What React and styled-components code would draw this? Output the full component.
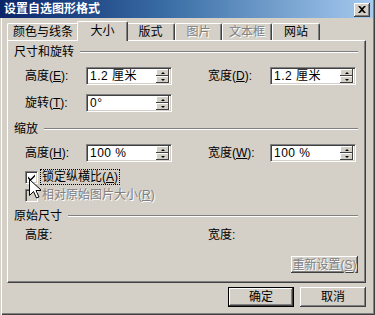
import styled, { createGlobalStyle } from 'styled-components';

const GlobalStyle = createGlobalStyle`
  html, body { margin: 0; padding: 0; background: #d4d0c8; }
  body {
    font-family: "Liberation Sans", "Noto Sans CJK SC", sans-serif;
    font-size: 12px;
    color: #000;
  }
`;

const Window = styled.div`
  position: relative;
  width: 375px;
  height: 315px;
  box-sizing: border-box;
  padding: 0 2px 2px 0;
  background: #d4d0c8;
  box-shadow: inset 1px 0 0 #d4d0c8, inset 2px 0 0 #fff,
    inset -1px -1px 0 #404040, inset -2px -2px 0 #808080;
  display: flex;
  flex-direction: column;
  overflow: hidden;
`;

const TitleBar = styled.div`
  height: 18px;
  display: flex;
  align-items: center;
  justify-content: space-between;
  padding: 0 3px 0 4px;
  background: linear-gradient(to right, #0a246a 0%, #3a6ea5 45%, #a6caf0 100%);
`;

const Title = styled.span`
  color: #fff;
  font-weight: bold;
  font-size: 12px;
  line-height: 14px;
`;

const CloseButton = styled.div`
  width: 16px;
  height: 14px;
  margin-top: 1px;
  box-sizing: border-box;
  background: #d4d0c8;
  box-shadow: inset -1px -1px 0 #404040, inset 1px 1px 0 #fff,
    inset -2px -2px 0 #808080;
  display: flex;
  align-items: center;
  justify-content: center;
`;

const Body = styled.div`
  flex: 1;
  display: flex;
  flex-direction: column;
  padding: 3px 7px 0 7px;
`;

const TabRow = styled.div`
  height: 19px;
  display: flex;
  align-items: flex-end;
`;

const Tab = styled.div`
  position: relative;
  z-index: ${({ $active }) => ($active ? 2 : 1)};
  width: ${({ $w }) => $w}px;
  height: ${({ $active }) => ($active ? 20 : 17)}px;
  margin: 0 ${({ $active }) => ($active ? -2 : 0)}px
    ${({ $active }) => ($active ? -1 : 0)}px;
  box-sizing: border-box;
  background: #d4d0c8;
  border-top: 1px solid #fff;
  border-left: 1px solid #fff;
  border-right: 1px solid #404040;
  box-shadow: inset -1px 0 0 #808080;
  border-radius: 2px 2px 0 0;
  display: flex;
  align-items: ${({ $active }) => ($active ? 'flex-start' : 'center')};
  padding-top: ${({ $active }) => ($active ? 2 : 0)}px;
  justify-content: center;
  line-height: 14px;
  color: ${({ $disabled }) => ($disabled ? '#808080' : '#000')};
  text-shadow: ${({ $disabled }) => ($disabled ? '1px 1px 0 #fff' : 'none')};
`;

const Panel = styled.div`
  position: relative;
  z-index: 1;
  height: 243px;
  box-sizing: border-box;
  padding: 4px 7px 0 6px;
  border-top: 1px solid #fff;
  border-left: 1px solid #fff;
  border-right: 1px solid #404040;
  border-bottom: 1px solid #404040;
  box-shadow: inset -1px -1px 0 #808080;
  display: flex;
  flex-direction: column;
`;

const SectionHeader = styled.div`
  height: 14px;
  margin-top: ${({ $mt }) => $mt || 0}px;
  display: flex;
  align-items: center;
  gap: 6px;
  line-height: 14px;

  &::after {
    content: '';
    flex: 1;
    height: 0;
    border-top: 1px solid #808080;
    border-bottom: 1px solid #fff;
  }
`;

const FieldRow = styled.div`
  display: flex;
  gap: 36px;
  padding-left: 11px;
  margin-top: ${({ $mt }) => $mt || 0}px;
`;

const Field = styled.div`
  display: grid;
  grid-template-columns: ${({ $label }) => $label}px 86px;
  align-items: center;
  height: ${({ $h }) => $h || 18}px;
  line-height: 14px;
`;

const Input = styled.div`
  height: 18px;
  box-sizing: border-box;
  background: #fff;
  border-top: 1px solid #808080;
  border-left: 1px solid #808080;
  border-right: 1px solid #fff;
  border-bottom: 1px solid #fff;
  box-shadow: inset 1px 1px 0 #404040, inset -1px -1px 0 #d4d0c8;
  display: flex;
  align-items: center;
  padding: 1px 2px 1px 3px;
`;

const InputText = styled.span`
  flex: 1;
  line-height: 14px;
  letter-spacing: 0.5px;
`;

const Spin = styled.div`
  width: 13px;
  height: 14px;
  display: flex;
  flex-direction: column;
`;

const SpinButton = styled.div`
  flex: 1;
  background: #d4d0c8;
  box-shadow: inset -1px -1px 0 #404040, inset 1px 1px 0 #fff;
  display: flex;
  align-items: center;
  justify-content: center;

  &::before {
    content: '';
    border-left: 2px solid transparent;
    border-right: 2px solid transparent;
    ${({ $down }) =>
      $down ? 'border-top: 2px solid #000;' : 'border-bottom: 2px solid #000;'}
  }
`;

const CheckRow = styled.div`
  display: flex;
  align-items: center;
  gap: 3px;
  height: 16px;
  padding-left: 11px;
  margin-top: ${({ $mt }) => $mt || 0}px;
  color: ${({ $disabled }) => ($disabled ? '#808080' : '#000')};
  text-shadow: ${({ $disabled }) => ($disabled ? '1px 1px 0 #fff' : 'none')};
`;

const CheckBox = styled.div`
  width: 13px;
  height: 13px;
  box-sizing: border-box;
  background: ${({ $disabled }) => ($disabled ? '#d4d0c8' : '#fff')};
  border-top: 1px solid #808080;
  border-left: 1px solid #808080;
  border-right: 1px solid #fff;
  border-bottom: 1px solid #fff;
  box-shadow: inset 1px 1px 0 #404040, inset -1px -1px 0 #d4d0c8;
  display: flex;
  align-items: center;
  justify-content: center;
`;

const CheckLabel = styled.span`
  line-height: 14px;
  padding: 0 1px;
  outline: ${({ $focus }) => ($focus ? '1px dotted #000' : 'none')};
`;

const ButtonRow = styled.div`
  display: flex;
  justify-content: flex-end;
  gap: 6px;
  margin-top: ${({ $mt }) => $mt || 0}px;
`;

const Button = styled.div`
  width: ${({ $w }) => $w || 66}px;
  height: ${({ $h }) => $h || 20}px;
  box-sizing: border-box;
  background: #d4d0c8;
  border: ${({ $default }) => ($default ? '1px solid #000' : 'none')};
  box-shadow: inset -1px -1px 0 #404040, inset 1px 1px 0 #fff,
    inset -2px -2px 0 #808080;
  display: flex;
  align-items: center;
  justify-content: center;
  line-height: 14px;
  color: ${({ $disabled }) => ($disabled ? '#808080' : '#000')};
  text-shadow: ${({ $disabled }) => ($disabled ? '1px 1px 0 #fff' : 'none')};
`;

const Cursor = styled.svg`
  position: absolute;
  left: 29px;
  top: 179px;
  z-index: 5;
`;

const Key = ({ children }) => <u>{children}</u>;

function SpinInput({ value }) {
  return (
    <Input>
      <InputText>{value}</InputText>
      <Spin>
        <SpinButton />
        <SpinButton $down />
      </Spin>
    </Input>
  );
}

const tabs = [
  { label: '颜色与线条', w: 72 },
  { label: '大小', w: 51, active: true },
  { label: '版式', w: 49 },
  { label: '图片', w: 47, disabled: true },
  { label: '文本框', w: 50, disabled: true },
  { label: '网站', w: 48 },
];

export default function App() {
  return (
    <>
      <GlobalStyle />
      <Window>
        <TitleBar>
          <Title>设置自选图形格式</Title>
          <CloseButton>
            <svg width="8" height="7" viewBox="0 0 8 7">
              <path d="M0 0h2l2 2 2-2h2L5 3.5 8 7H6L4 5 2 7H0l3-3.5z" fill="#000" />
            </svg>
          </CloseButton>
        </TitleBar>
        <Body>
          <TabRow>
            {tabs.map((t) => (
              <Tab key={t.label} $w={t.w} $active={t.active} $disabled={t.disabled}>
                {t.label}
              </Tab>
            ))}
          </TabRow>
          <Panel>
            <SectionHeader>尺寸和旋转</SectionHeader>
            <FieldRow $mt={8}>
              <Field $label={61}>
                <span>高度(<Key>E</Key>):</span>
                <SpinInput value="1.2 厘米" />
              </Field>
              <Field $label={62}>
                <span>宽度(<Key>D</Key>):</span>
                <SpinInput value="1.2 厘米" />
              </Field>
            </FieldRow>
            <FieldRow $mt={9}>
              <Field $label={61}>
                <span>旋转(<Key>T</Key>):</span>
                <SpinInput value="0°" />
              </Field>
            </FieldRow>
            <SectionHeader $mt={10}>缩放</SectionHeader>
            <FieldRow $mt={8}>
              <Field $label={61}>
                <span>高度(<Key>H</Key>):</span>
                <SpinInput value="100 %" />
              </Field>
              <Field $label={62}>
                <span>宽度(<Key>W</Key>):</span>
                <SpinInput value="100 %" />
              </Field>
            </FieldRow>
            <CheckRow $mt={7}>
              <CheckBox>
                <svg width="7" height="7" viewBox="0 0 7 7">
                  <path d="M0 2.5l2.5 2.5L7 0.5v2L2.5 7 0 4.5z" fill="#000" />
                </svg>
              </CheckBox>
              <CheckLabel $focus>锁定纵横比(<Key>A</Key>)</CheckLabel>
            </CheckRow>
            <CheckRow $mt={2} $disabled>
              <CheckBox $disabled />
              <CheckLabel>相对原始图片大小(<Key>R</Key>)</CheckLabel>
            </CheckRow>
            <SectionHeader $mt={6}>原始尺寸</SectionHeader>
            <FieldRow $mt={5}>
              <Field $label={61} $h={14}>
                <span>高度:</span>
                <span />
              </Field>
              <Field $label={62} $h={14}>
                <span>宽度:</span>
                <span />
              </Field>
            </FieldRow>
            <ButtonRow $mt={14}>
              <Button $w={67} $h={17} $disabled>
                重新设置(<Key>S</Key>)
              </Button>
            </ButtonRow>
          </Panel>
          <ButtonRow $mt={4}>
            <Button $default>确定</Button>
            <Button>取消</Button>
          </ButtonRow>
        </Body>
        <Cursor width="12" height="20" viewBox="0 0 12 20">
          <path
            d="M0.5 0.5v16l4-4 3 6.5 2.5-1-3-6.5h5.5z"
            fill="#fff"
            stroke="#000"
            strokeWidth="1"
          />
        </Cursor>
      </Window>
    </>
  );
}
